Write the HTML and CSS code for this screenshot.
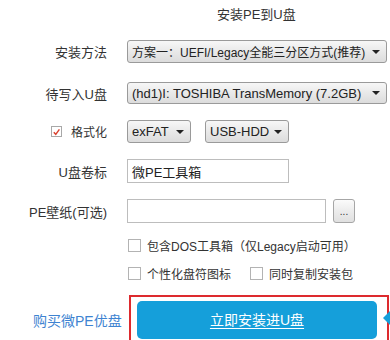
FILE: index.html
```html
<!DOCTYPE html>
<html lang="zh-CN">
<head>
<meta charset="utf-8">
<title>安装PE到U盘</title>
<link rel="stylesheet" href="styles.css">
</head>
<body>
<div class="page">
  <div class="title">安装PE到U盘</div>

  <div class="row r1">
    <div class="label">安装方法</div>
    <div class="select wide"><span class="val tight">方案一：UEFI/Legacy全能三分区方式(推荐)</span><span class="arrow"></span></div>
  </div>

  <div class="row r2">
    <div class="label">待写入U盘</div>
    <div class="select wide"><span class="val">(hd1)I: TOSHIBA TransMemory (7.2GB)</span><span class="arrow"></span></div>
  </div>

  <div class="row r3">
    <div class="label check-label"><span class="box checked"><svg viewBox="0 0 10 10" width="10" height="10"><path d="M2 5.2 L4.2 7.6 L8.2 2" fill="none" stroke="#d9402e" stroke-width="1.6"/></svg></span><span>格式化</span></div>
    <div class="select fs"><span class="val">exFAT</span><span class="arrow"></span></div>
    <div class="select mode"><span class="val">USB-HDD</span><span class="arrow"></span></div>
  </div>

  <div class="row r4">
    <div class="label">U盘卷标</div>
    <div class="input vol">微PE工具箱</div>
  </div>

  <div class="row r5">
    <div class="label">PE壁纸(可选)</div>
    <div class="input wall"></div>
    <div class="browse">...</div>
  </div>

  <div class="opts r6">
    <span class="box"></span><span class="opt">包含DOS工具箱（仅Legacy启动可用）</span>
  </div>

  <div class="opts r7">
    <span class="box"></span><span class="opt">个性化盘符图标</span>
    <span class="box second"></span><span class="opt">同时复制安装包</span>
  </div>

  <div class="bottom">
    <div class="buy">购买微PE优盘</div>
    <div class="focus">
      <div class="install">立即安装进U盘</div>
    </div>
  </div>
  <div class="pointer"></div>
</div>
</body>
</html>
```

FILE: styles.css
```css
html, body {
  margin: 0;
  padding: 0;
  background: #ffffff;
}
body {
  font-family: "Liberation Sans", "Noto Sans CJK SC", sans-serif;
  font-size: 13px;
  color: #333333;
}
.page {
  position: relative;
  width: 390px;
  height: 340px;
  overflow: hidden;
}
.title {
  height: 30px;
  line-height: 30px;
  padding-left: 217px;
  margin-bottom: 10px;
}
.row {
  display: flex;
  align-items: center;
}
.label {
  width: 107px;
  margin-right: 20px;
  text-align: right;
  flex-shrink: 0;
  white-space: nowrap;
}
.check-label {
  display: flex;
  justify-content: flex-end;
  align-items: center;
  font-size: 12px;
}
.check-label .box {
  margin-right: 9px;
}
.r1 { height: 23px; margin-bottom: 19px; }
.r2 { height: 22px; margin-bottom: 16px; }
.r3 { height: 23px; margin-bottom: 16px; }
.r4 { height: 24px; margin-bottom: 16px; }
.r5 { height: 24px; }

.select {
  box-sizing: border-box;
  height: 100%;
  display: flex;
  align-items: center;
  justify-content: space-between;
  padding: 0 6px 0 4px;
  border: 1px solid #9a9a9a;
  border-radius: 3px;
  background: linear-gradient(#f7f7f7, #e9e9e9 50%, #dcdcdc);
  color: #222222;
  white-space: nowrap;
}
.val.tight {
  font-size: 12px;
}
.select.wide { width: 260px; }
.select.fs { width: 64px; margin-right: 14px; }
.select.mode { width: 84px; }
.arrow {
  flex-shrink: 0;
  margin-left: 4px;
  width: 0;
  height: 0;
  border-left: 4px solid transparent;
  border-right: 4px solid transparent;
  border-top: 4px solid #222222;
}
.input {
  box-sizing: border-box;
  height: 100%;
  border: 1px solid #bdbdbd;
  background: #ffffff;
  padding: 0 4px;
  display: flex;
  align-items: center;
  color: #222222;
}
.input.vol { width: 162px; }
.input.wall { width: 199px; margin-right: 7px; }
.browse {
  box-sizing: border-box;
  width: 22px;
  height: 24px;
  border: 1px solid #a6a6a6;
  border-radius: 3px;
  background: linear-gradient(#fbfbfb, #ececec 50%, #e0e0e0);
  font-size: 10px;
  line-height: 24px;
  text-align: center;
  color: #333;
}
.box {
  box-sizing: border-box;
  display: inline-flex;
  align-items: center;
  justify-content: center;
  width: 13px;
  height: 13px;
  border: 1px solid #b3b3b3;
  background: #ffffff;
  flex-shrink: 0;
}
.box.checked {
  width: 11px;
  height: 11px;
  border-color: #a8a8a8;
}
.opts {
  display: flex;
  align-items: center;
  padding-left: 128px;
  height: 14px;
  font-size: 12px;
}
.opt {
  margin-left: 6px;
  white-space: nowrap;
}
.r6 { margin-top: 15px; }
.r7 { margin-top: 14px; }
.box.second { margin-left: 19px; }

.bottom {
  display: flex;
  margin-top: 15px;
}
.buy {
  width: 129px;
  box-sizing: border-box;
  padding-left: 33px;
  padding-top: 15px;
  font-size: 14px;
  color: #3e83d1;
  white-space: nowrap;
}
.focus {
  box-sizing: border-box;
  width: 260px;
  height: 52px;
  border: 2px solid #dd2a2e;
  padding: 4px 10px 0 6px;
}
.install {
  height: 38px;
  border-radius: 5px;
  background: #159fda;
  color: #ffffff;
  font-size: 14px;
  line-height: 38px;
  text-align: center;
  text-decoration: underline;
  text-underline-offset: 3px;
}
.pointer {
  position: absolute;
  left: 383px;
  top: 311px;
  width: 0;
  height: 0;
  border-top: 7px solid transparent;
  border-bottom: 7px solid transparent;
  border-right: 7px solid #159fda;
}
```
